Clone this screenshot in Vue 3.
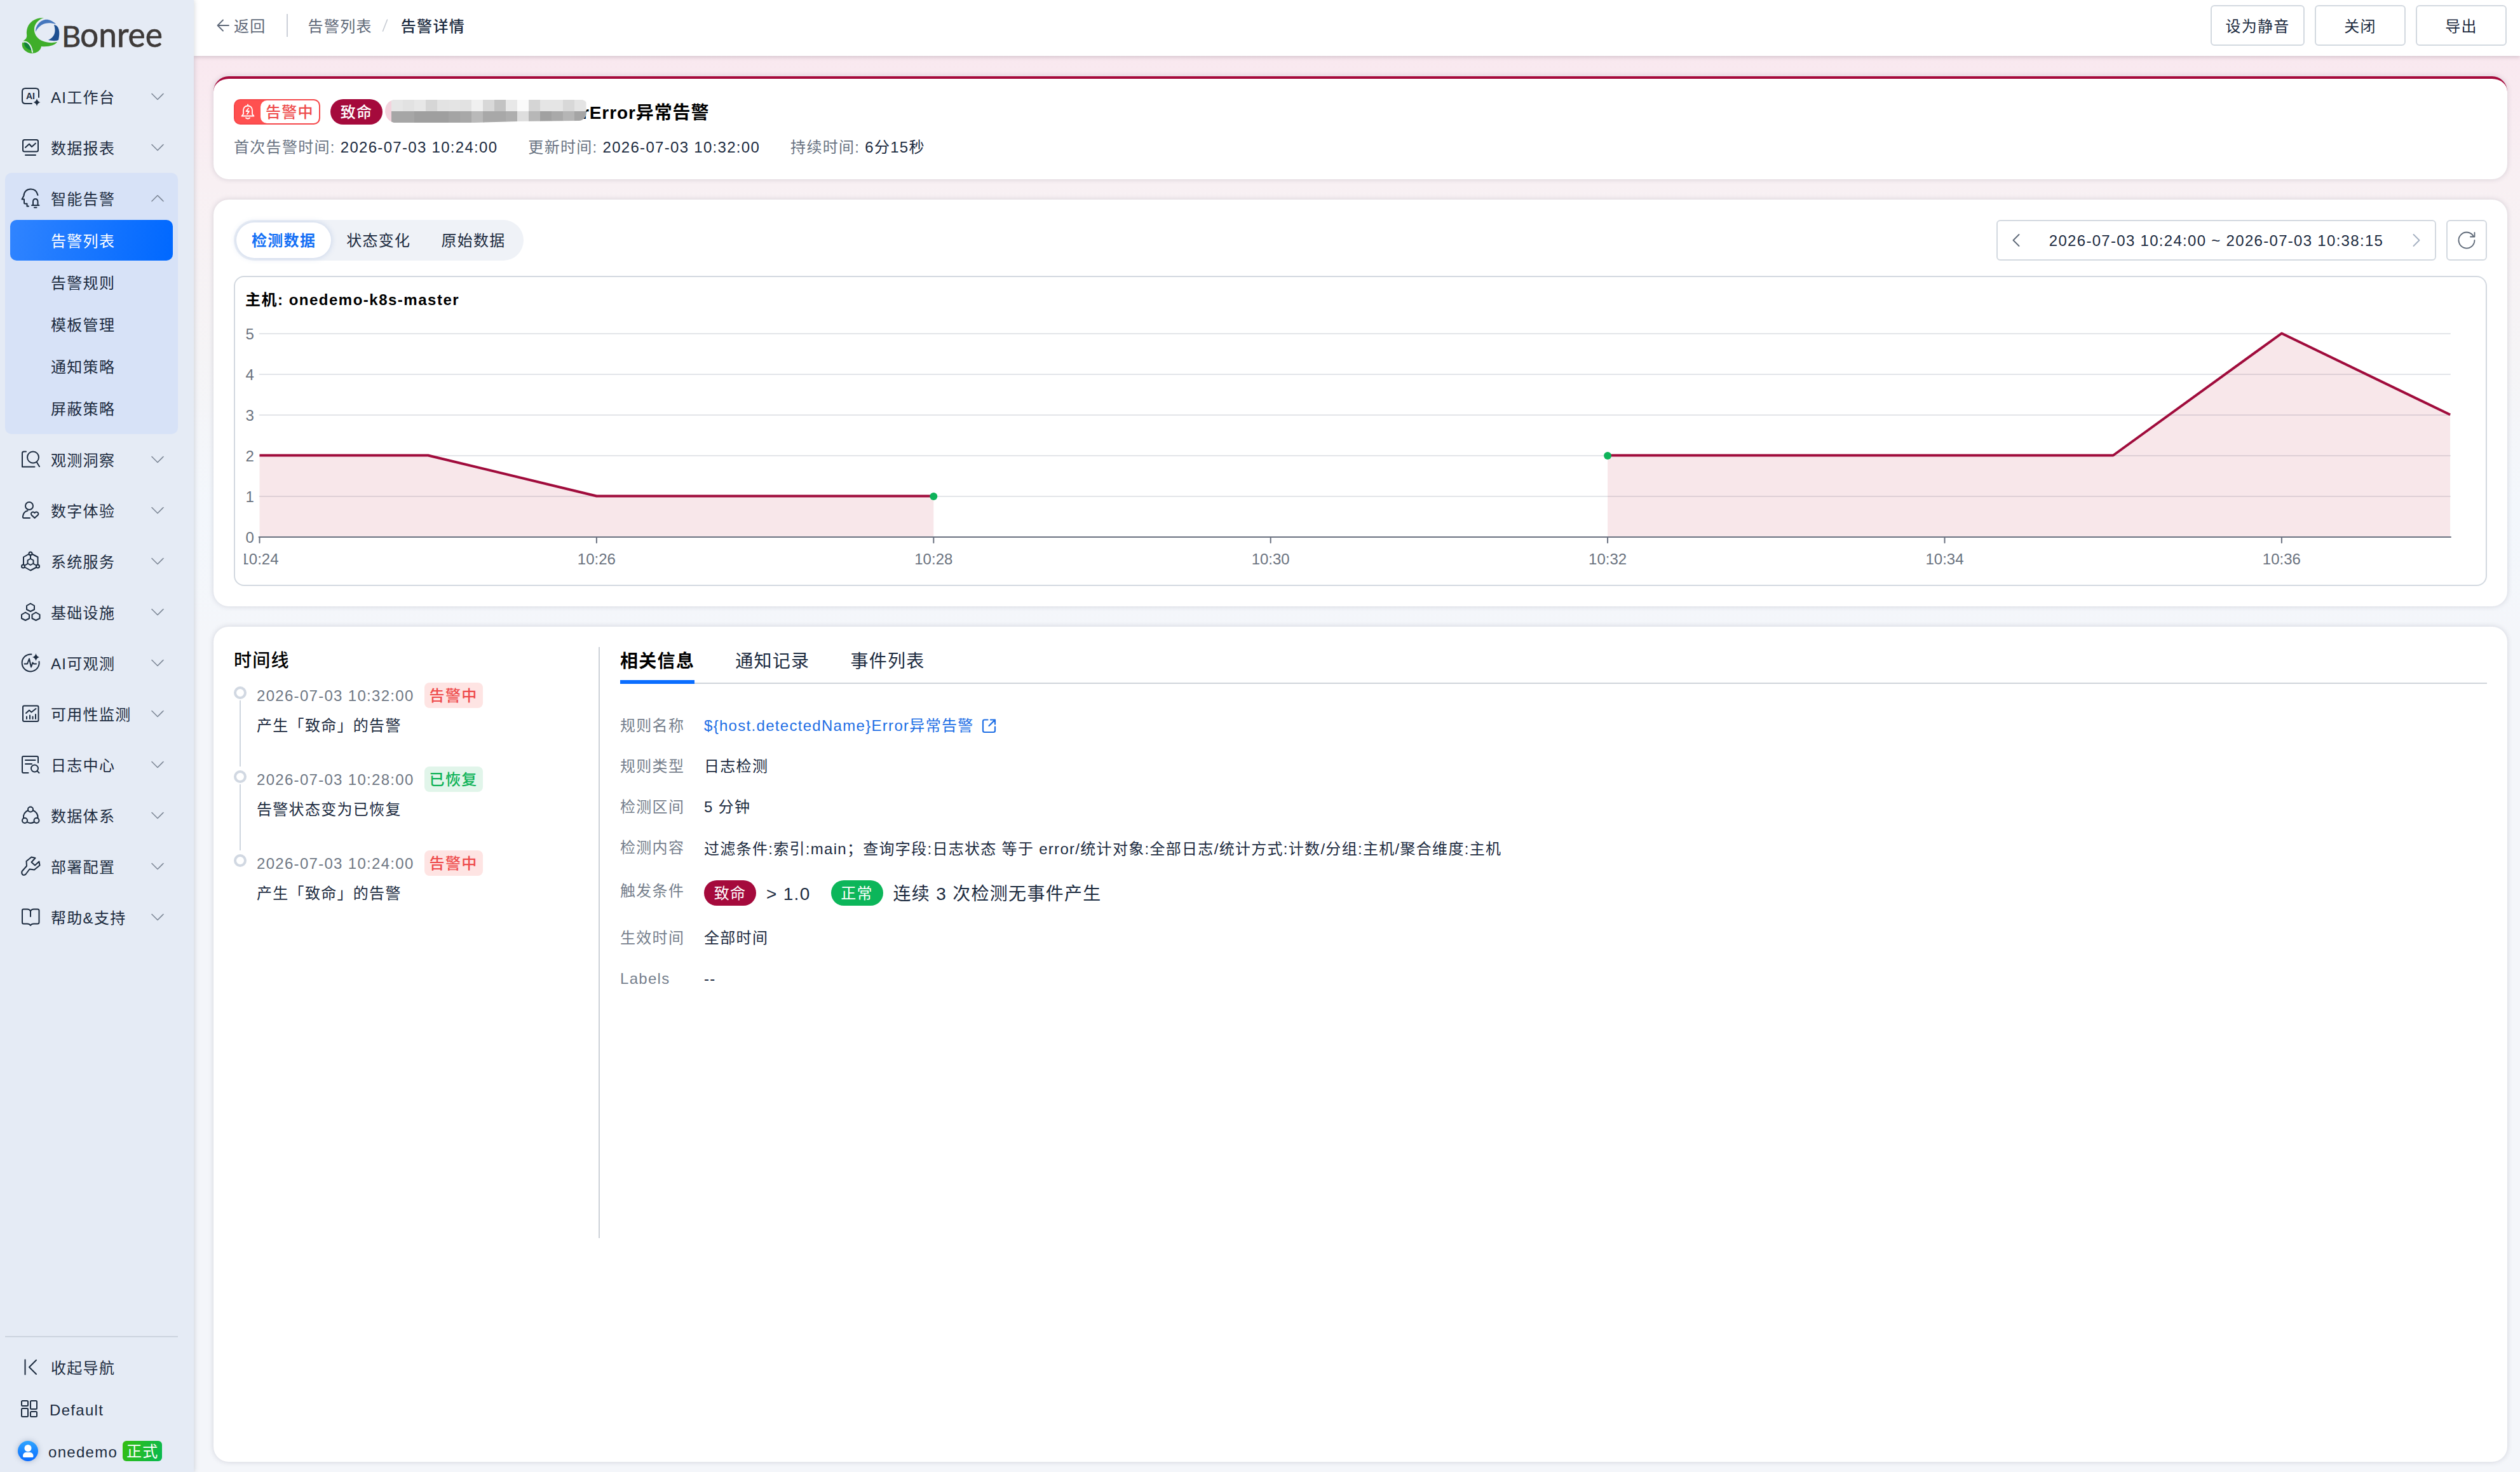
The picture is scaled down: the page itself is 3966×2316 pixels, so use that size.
<template>
  <div class="layout">
    <aside class="sidebar">
      <div class="logo">
        <svg width="170" height="60" viewBox="0 0 170 60">
          <path d="M34 0C14 0 6 13 7 26C8 32 5 34 1 37C-3 45 3 54 14 56C24 56 29 51 30 45C42 46 52 43 55 38C44 41 29 38 23 30C15 19 19 5 34 0Z" fill="#3fae2a" />
          <path d="M3 39C7 37 13 41 15 51C8 50 3 46 3 39Z" fill="#12813a" />
          <path d="M1 38C6 36 14 40 16 54" fill="none" stroke="#e9f0f5" stroke-width="2" />
          <path d="M21 22C21 8 37 -6 53 10C39 6 28 9 21 22Z" fill="#4577bd" />
          <path d="M50 11C58 12 60 22 57 35C52 37 46 36 41 35C50 31 54 23 50 11Z" fill="#1d4f91" />
          <text x="62" y="45.5" class="logo-text"><tspan font-size="47">B</tspan><tspan x="91" font-size="55" textLength="130" lengthAdjust="spacingAndGlyphs">onree</tspan></text>
        </svg>
      </div>

      <nav class="menu">
        <div v-for="item in menus" :key="item.name" :class="item.children ? 'menu-group' : ''">
          <div class="menu-item">
            <svg class="menu-icon" viewBox="0 0 32 32" v-html="item.icon"></svg>
            <span class="menu-name">{{ item.name }}</span>
            <svg class="chevron" viewBox="0 0 20 12">
              <path :d="item.children ? 'M1 10.5L10 1.5L19 10.5' : 'M1 1.5L10 10.5L19 1.5'" />
            </svg>
          </div>
          <template v-if="item.children">
            <div v-for="(sub, i) in item.children" :key="sub" class="sub-item" :class="{ active: i === 0 }">{{ sub }}</div>
          </template>
        </div>
      </nav>

      <div class="side-bottom">
        <div class="bottom-item">
          <svg class="menu-icon" viewBox="0 0 32 32"><path d="M7.5 4.5V27.5M25 5L14 16L25 27" /></svg>
          <span>收起导航</span>
        </div>
        <div class="bottom-item">
          <svg class="menu-icon" viewBox="0 0 32 32">
            <rect x="2" y="3" width="10" height="8" rx="1.5" /><rect x="16" y="3" width="10" height="13" rx="1.5" />
            <rect x="2" y="15" width="10" height="13" rx="1.5" /><rect x="16" y="20" width="10" height="8" rx="1.5" />
          </svg>
          <span>Default</span>
        </div>
        <div class="bottom-item user">
          <div class="avatar">
            <svg width="32" height="32" viewBox="0 0 32 32">
              <circle cx="16" cy="11.5" r="5.5" />
              <path d="M8 24C8 20 10.5 18 13 18H19C21.5 18 24.5 20 24.5 24C24.5 25.5 24 26 22.5 26H10C8.5 26 8 25.5 8 24Z" />
            </svg>
          </div>
          <span>onedemo</span>
          <span class="version">正式</span>
        </div>
      </div>
    </aside>

    <div class="main">
      <header class="topbar">
        <div class="back">
          <svg width="20" height="20" viewBox="0 0 20 20"><path d="M10 1.5L1.5 10L10 18.5M1.5 10H19" /></svg>
          <span>返回</span>
        </div>
        <i class="split"></i>
        <span class="crumb">告警列表</span>
        <svg class="slash" width="10" height="20" viewBox="0 0 10 20"><path d="M8.5 1L1.5 19" /></svg>
        <span class="crumb current">告警详情</span>
        <div class="actions">
          <button type="button">设为静音</button>
          <button type="button">关闭</button>
          <button type="button">导出</button>
        </div>
      </header>

      <div class="content">
        <section class="card summary">
          <div class="title-row">
            <div class="status">
              <div class="status-icon">
                <svg width="24" height="26" viewBox="0 0 24 26">
                  <path d="M2.5 19.5H21.5L19 16.5V10.5C19 6 16 3.500 12 3.500S5 6 5 10.5V16.5ZM12 3.5V1.5M9 22.5Q12 25 15 22.5" />
                  <path d="M13 7.5L9.5 12H14L11 16.5" />
                </svg>
              </div>
              <span>告警中</span>
            </div>
            <span class="pill fatal">致命</span>
            <div class="title">
              <svg class="mosaic" width="320" height="38" viewBox="0 0 320 38">
                <defs>
                  <clipPath id="mask"><path d="M14 1H311Q319 4 319 12V18Q315 34 305 34L210 35L140 37H14Q2 34 0 20Q0 4 14 1Z" /></clipPath>
                </defs>
                <g clip-path="url(#mask)">
                  <rect width="14" height="38" fill="#f3d3dd" />
                  <template v-for="(c, i) in mosaic" :key="i">
                    <rect :x="10 + i * 18" y="0" width="18.5" height="19" :fill="c[0]" />
                    <rect :x="10 + i * 18" y="19" width="18.5" height="19" :fill="c[1]" />
                  </template>
                </g>
              </svg>
              <h1><span>r</span>Error异常告警</h1>
            </div>
          </div>
          <div class="meta">
            <div v-for="m in meta" :key="m.label">
              <span class="label">{{ m.label }}:</span>
              <span>{{ m.value }}</span>
            </div>
          </div>
        </section>

        <section class="card detect">
          <div class="detect-head">
            <div class="segment">
              <span v-for="(s, i) in segments" :key="s" :class="{ on: i === 0 }">{{ s }}</span>
            </div>
            <div class="range">
              <div class="range-box">
                <svg width="12" height="20" viewBox="0 0 12 20"><path d="M10.5 1L1.5 10L10.5 19" /></svg>
                <span>2026-07-03 10:24:00 ~ 2026-07-03 10:38:15</span>
                <svg class="dim" width="12" height="20" viewBox="0 0 12 20"><path d="M1.5 1L10.5 10L1.5 19" /></svg>
              </div>
              <div class="refresh">
                <svg width="32" height="32" viewBox="0 0 32 32">
                  <path d="M28.5 16A12.5 12.5 0 1 1 26.5 9.2M28.5 4V10.5H22" />
                </svg>
              </div>
            </div>
          </div>

          <div class="chart-box">
            <h3>主机: onedemo-k8s-master</h3>
            <svg class="chart" width="3510" height="400" viewBox="384 496 3510 400">
              <g v-for="v in 6" :key="'y' + v">
                <line v-if="v > 1" class="grid" x1="408.5" x2="3856" :y1="yPos(v - 1)" :y2="yPos(v - 1)" />
                <text x="386.5" :y="yPos(v - 1) + 8.5">{{ v - 1 }}</text>
              </g>
              <path v-for="(s, i) in series" :key="'a' + i" class="area" :d="areaPath(s)" />
              <line class="axis" x1="407.5" x2="3857" y1="845" y2="845" />
              <g v-for="m in 7" :key="'x' + m">
                <line class="axis" :x1="xPos(m * 2 - 2)" :x2="xPos(m * 2 - 2)" y1="845" y2="854" />
                <text :x="xPos(m * 2 - 2)" y="887.5" text-anchor="middle">10:{{ 22 + m * 2 }}</text>
              </g>
              <path v-for="(s, i) in series" :key="'l' + i" class="line" :d="linePath(s)" />
              <circle :cx="xPos(4)" :cy="yPos(1)" r="6" fill="#0eb35a" />
              <circle :cx="xPos(8)" :cy="yPos(2)" r="6" fill="#0eb35a" />
            </svg>
          </div>
        </section>

        <section class="card detail">
          <div class="timeline">
            <h2>时间线</h2>
            <div v-for="(t, i) in timeline" :key="i" class="node">
              <div class="rail"><i class="dot"></i><i v-if="i < timeline.length - 1" class="bar"></i></div>
              <div>
                <div class="node-head">
                  <span class="time">{{ t.time }}</span>
                  <span class="tag" :class="t.type">{{ t.tag }}</span>
                </div>
                <div class="node-text">{{ t.text }}</div>
              </div>
            </div>
          </div>
          <div class="info">
            <div class="tabs">
              <span v-for="(t, i) in tabs" :key="t" :class="{ on: i === 0 }">{{ t }}</span>
            </div>
            <div class="rows">
              <div class="row">
                <span class="label">规则名称</span>
                <a>${host.detectedName}Error异常告警
                  <svg width="24" height="24" viewBox="0 0 24 24">
                    <path d="M9.5 2.5H4.5Q2 2.5 2 5V19.5Q2 22 4.5 22H18.5Q21 22 21 19.5V13.5M14 2.5H21V9.5M21 2.5L11.5 12" />
                  </svg>
                </a>
              </div>
              <div class="row"><span class="label">规则类型</span><span>日志检测</span></div>
              <div class="row"><span class="label">检测区间</span><span>5 分钟</span></div>
              <div class="row">
                <span class="label">检测内容</span>
                <span class="low">过滤条件:索引:main；查询字段:日志状态 等于 error/统计对象:全部日志/统计方式:计数/分组:主机/聚合维度:主机</span>
              </div>
              <div class="row trigger">
                <span class="label">触发条件</span>
                <span class="pill fatal">致命</span>
                <span class="cond">&gt; 1.0</span>
                <span class="pill normal">正常</span>
                <span class="cond">连续 3 次检测无事件产生</span>
              </div>
              <div class="row"><span class="label">生效时间</span><span>全部时间</span></div>
              <div class="row"><span class="label">Labels</span><span>--</span></div>
            </div>
          </div>
        </section>
      </div>
    </div>
  </div>
</template>

<script setup>
const menus = [
  {
    name: 'AI工作台',
    icon: '<path d="M18 27H8Q3 27 3 22V8Q3 3 8 3H24Q29 3 29 8V17"/><text x="9" y="19.5" font-size="14" font-weight="700" letter-spacing="0" fill="#1c2b3f" stroke="none">AI</text><path d="M26 19Q27 24 31.5 25Q27 26 26 31Q25 26 20.5 25Q25 24 26 19Z" fill="#1c2b3f" stroke="none"/>'
  },
  {
    name: '数据报表',
    icon: '<rect x="4" y="4" width="24" height="18.5" rx="2.5"/><path d="M8 16L14 10.5L18 15L24 9.5M8 28H24"/>'
  },
  {
    name: '智能告警',
    icon: '<path d="M27.5 11C26 4.5 21.5 1.5 16.5 1.5C10 1.5 5.5 6 5.5 12L2.5 17.5H6V23.5Q6 24.5 7.5 24.5H10.5V28.5H13"/><path d="M18 27H29.5M20 27V21.5Q20 17 23.7 17T27.5 21.5V27M22 30.5H25.5"/>',
    children: ['告警列表', '告警规则', '模板管理', '通知策略', '屏蔽策略']
  },
  {
    name: '观测洞察',
    icon: '<path d="M9 3.5H5.5Q3 3.5 3 6V27.5H22.5M26 20.5L30 27"/><circle cx="20" cy="12.5" r="9"/>'
  },
  {
    name: '数字体验',
    icon: '<circle cx="14" cy="9" r="6"/><path d="M15 28H5.5Q3.5 28 4 25Q5 18 11.5 16.5"/><path d="M22.5 28L17.8 23.5C15 20.5 19.5 16.5 22.5 20C25.5 16.5 30.5 20.5 27.5 23.5Z"/>'
  },
  {
    name: '系统服务',
    icon: '<path d="M13 5L5 9.5V21M19 5L27.5 9.5V21M8 26L16 30.5L24.5 26M16 6V12M11.5 20L7 22.5M20.5 20L25 22.5"/><path d="M16 12L20.5 14.5V19.5L16 22L11.5 19.5V14.5Z"/><circle cx="16" cy="4" r="2.5"/><circle cx="4.5" cy="24" r="2.5"/><circle cx="27.5" cy="24" r="2.5"/>'
  },
  {
    name: '基础设施',
    icon: '<path d="M16 2.5L22 6V12L16 15L10 12V6ZM8 16.5L14 20V26L8 29L2 26V20ZM24.5 16.5L30.5 20V26L24.5 29L18.5 26V20Z"/>'
  },
  {
    name: 'AI可观测',
    icon: '<path d="M17.5 2.5A13.5 13.5 0 1 0 29.5 14M6.5 17.5H11L14 9.5L17 22.5L19.5 15.5L21 17.5H25"/><path d="M24.5 1Q25.5 6 30 7Q25.5 8 24.5 13Q23.5 8 19 7Q23.5 6 24.5 1Z" fill="#1c2b3f" stroke="none"/>'
  },
  {
    name: '可用性监测',
    icon: '<rect x="4" y="3.5" width="24.5" height="24.5" rx="2"/><path d="M9 15L14 10.5L17.5 13.5L24.5 8M10 20.5V24M15 18.5V24M19.5 20.5V24M24 17V24"/>'
  },
  {
    name: '日志中心',
    icon: '<path d="M12.5 29H5Q3 29 3 27V5Q3 3 5 3H26Q28 3 28 5V13M8 9H23.5M8 15H18"/><circle cx="22.5" cy="22" r="5.5"/><path d="M26.5 26L29.5 29"/>'
  },
  {
    name: '数据体系',
    icon: '<circle cx="16" cy="6.5" r="4"/><circle cx="7" cy="24" r="4"/><circle cx="25.5" cy="24" r="4"/><path d="M12 8C7 10.5 4.5 15 5 20M20 8C25.5 10.5 28 15 27.5 20M11 26.5Q16 29.5 21.5 26.5"/>'
  },
  {
    name: '部署配置',
    icon: '<path d="M23.5 3L17.5 1.5L9.5 8L10 15.5L2.5 24Q1.5 27.5 4 29.5Q6.5 30.5 8.5 28.5L14.5 20.5L22 21.5L30.5 14.5L29.5 8.5L23 14.5L17.5 9.5Z"/>'
  },
  {
    name: '帮助&支持',
    icon: '<path d="M16 6.5Q14.5 3.5 11 3.5H5Q3 3.5 3 5.5V24Q3 26.5 5 26.5H11Q14.5 26.5 16 29Q17.5 26.5 21 26.5H27Q29.5 26.5 29.5 24V5.5Q29.5 3.5 27 3.5H21Q17.5 3.5 16 6.5V15"/>'
  }
]

const mosaic = [
  ['#e6e6e6', '#a6a6a6'], ['#e2e2e2', '#a6a6a6'], ['#e7e7e7', '#9f9f9f'], ['#d6d6d6', '#9f9f9f'],
  ['#e3e3e3', '#9f9f9f'], ['#e4e4e4', '#a4a4a4'], ['#e2e2e2', '#a8a8a8'], ['#f0f0f0', '#b9b9b9'],
  ['#d8d8d8', '#a8a8a8'], ['#c3c3c3', '#a8a8a8'], ['#e8e8e8', '#aeaeae'], ['#fafafa', '#dedede'],
  ['#d5d5d5', '#b7b7b7'], ['#e5e5e5', '#a1a1a1'], ['#e5e5e5', '#a9a9a9'], ['#d8d8d8', '#b5b5b5'],
  ['#e4e4e4', '#a5a5a5']
]

const meta = [
  { label: '首次告警时间', value: '2026-07-03 10:24:00' },
  { label: '更新时间', value: '2026-07-03 10:32:00' },
  { label: '持续时间', value: '6分15秒' }
]

const segments = ['检测数据', '状态变化', '原始数据']
const tabs = ['相关信息', '通知记录', '事件列表']

const timeline = [
  { time: '2026-07-03 10:32:00', tag: '告警中', type: 'alarm', text: '产生「致命」的告警' },
  { time: '2026-07-03 10:28:00', tag: '已恢复', type: 'ok', text: '告警状态变为已恢复' },
  { time: '2026-07-03 10:24:00', tag: '告警中', type: 'alarm', text: '产生「致命」的告警' }
]

// [minute after 10:24, count]
const series = [
  [[0, 2], [1, 2], [2, 1], [4, 1]],
  [[8, 2], [11, 2], [12, 5], [13, 3]]
]

const xPos = (m) => 408.5 + m * 265.2
const yPos = (v) => 845 - v * 64

const linePath = (s) => 'M' + s.map(([m, v]) => `${xPos(m)} ${yPos(v) - 0.5}`).join('L')
const areaPath = (s) => `${linePath(s)}L${xPos(s[s.length - 1][0])} 845L${xPos(s[0][0])} 845Z`
</script>

<style>
body {
  margin: 0;
}
</style>

<style scoped>
* {
  box-sizing: border-box;
}

h1,
h2,
h3 {
  margin: 0;
}

.layout {
  display: flex;
  width: 3966px;
  height: 2316px;
  overflow: hidden;
  font-family: "Liberation Sans", "Noto Sans CJK SC", sans-serif;
  font-size: 24px;
  line-height: 32px;
  letter-spacing: 1.3px;
  color: #1c2b3f;
  white-space: nowrap;
}

svg {
  display: block;
  flex-shrink: 0;
  fill: none;
  stroke-linecap: round;
  stroke-linejoin: round;
}

/* sidebar */
.sidebar {
  display: flex;
  flex-direction: column;
  width: 305px;
  flex-shrink: 0;
  padding: 0 25px 0 8px;
  background: #e5ebf5;
  box-shadow: 0 0 8px rgba(60, 70, 90, 0.25);
  z-index: 2;
}

.logo {
  height: 112px;
  padding: 28px 0 0 27px;
}

.logo svg {
  overflow: visible;
}

.logo-text {
  font-family: Lato, sans-serif;
  letter-spacing: 0;
  fill: #3e3a39;
  stroke: #3e3a39;
  stroke-width: 0.6;
}

.menu-item {
  display: flex;
  align-items: center;
  height: 80px;
  padding: 0 22px 0 24px;
}

.menu-icon {
  width: 32px;
  height: 32px;
  stroke: #1c2b3f;
  stroke-width: 2;
}

.menu-name {
  flex: 1;
  margin-left: 16px;
  padding-top: 3px;
}

.chevron {
  width: 20px;
  height: 12px;
  stroke: #7d8796;
  stroke-width: 1.6;
}

.menu-group {
  height: 411px;
  border-radius: 10px;
  background: #d7e2f7;
}

.menu-group .menu-item {
  height: 74px;
  padding-top: 6px;
}

.sub-item {
  height: 64px;
  margin: 0 8px 2px;
  padding-left: 64px;
  line-height: 67px;
  border-radius: 10px;
}

.sub-item.active {
  color: #fff;
  background: linear-gradient(100deg, #3084ff, #0068ff);
}

.side-bottom {
  margin-top: auto;
  height: 214px;
  padding-top: 14px;
  border-top: 2px solid #ccd3df;
}

.bottom-item {
  display: flex;
  align-items: center;
  gap: 16px;
  height: 66px;
  padding-left: 24px;
}

.bottom-item span {
  padding-top: 3px;
}

.bottom-item:nth-child(2) {
  gap: 14px;
}

.bottom-item.user {
  padding-left: 20px;
}

.avatar {
  width: 32px;
  height: 32px;
  border-radius: 50%;
  background: linear-gradient(#2fa5ff, #0a6bff);
  box-shadow: 0 0 8px rgba(60, 80, 120, 0.35);
}

.avatar svg {
  fill: #fff;
}

.bottom-item .version {
  width: 62px;
  height: 32px;
  margin-left: -8px;
  padding-top: 1px;
  border-radius: 6px;
  text-align: center;
  color: #fff;
  background: linear-gradient(110deg, #35be10, #08b951);
}

/* top bar */
.main {
  flex: 1;
  display: flex;
  flex-direction: column;
  background: linear-gradient(#f9e8ef 88px, #f8f0f3 290px, #f5f4f6 560px, #f3f7fc 800px, #f4f6fa 1000px);
}

.topbar {
  display: flex;
  align-items: center;
  height: 88px;
  padding: 0 21px 8px 36px;
  flex-shrink: 0;
  background: #fff;
  box-shadow: 0 2px 6px rgba(60, 40, 60, 0.2);
  z-index: 1;
}

.topbar span {
  padding-top: 3px;
}

.back {
  display: flex;
  align-items: center;
  gap: 7px;
  color: #5e6878;
}

.back svg {
  stroke: #5e6878;
  stroke-width: 1.8;
}

.split {
  width: 2px;
  height: 36px;
  margin: 0 32px 0 32px;
  background: #cbd0d8;
}

.crumb {
  color: #5e6878;
}

.crumb.current {
  font-weight: 500;
  color: #1c2b3f;
}

.slash {
  margin: 0 20px 0 15px;
  stroke: #c5cad2;
  stroke-width: 1.6;
}

.actions {
  display: flex;
  gap: 16px;
  margin-left: auto;
}

button {
  width: 143px;
  height: 64px;
  padding: 3px 0 0;
  border: 2px solid #d3d9e0;
  border-radius: 6px;
  font: inherit;
  letter-spacing: inherit;
  color: inherit;
  background: #fff;
}

button:first-child {
  width: 148px;
}

.content {
  flex: 1;
  display: flex;
  flex-direction: column;
  gap: 32px;
  padding: 32px 20px 16px 31px;
}

.card {
  border-radius: 24px;
  background: #fff;
  box-shadow: 0 0 8px rgba(50, 50, 80, 0.18);
}

/* summary */
.summary {
  height: 162px;
  padding: 32px;
  border-top: 4px solid #a60a3c;
}

.title-row {
  display: flex;
  align-items: center;
  height: 40px;
}

.status {
  display: flex;
  align-items: center;
  width: 136px;
  height: 40px;
  border: 2px solid #f5484b;
  border-radius: 10px;
  overflow: hidden;
  color: #ee4b4b;
  font-weight: 500;
  background: #ff5050;
}

.status-icon {
  display: flex;
  align-items: center;
  justify-content: center;
  width: 40px;
}

.status-icon svg {
  stroke: #fff;
  stroke-width: 1.8;
}

.status > span {
  flex: 1;
  height: 36px;
  padding-left: 8px;
  line-height: 38px;
  border-radius: 10px 8px 8px 10px;
  background: #fff;
}

.pill {
  width: 82px;
  height: 40px;
  border-radius: 20px;
  text-align: center;
  line-height: 42px;
  color: #fff;
  font-weight: 500;
}

.pill.fatal {
  background: #a50a3c;
}

.pill.normal {
  background: #0cb65a;
}

.title-row .pill {
  margin-left: 16px;
}

.title {
  display: flex;
  position: relative;
  margin-left: 4px;
}

.mosaic {
  position: absolute;
  left: 0;
  top: 0;
}

.title h1 {
  height: 40px;
  padding-left: 310px;
  font-size: 28px;
  line-height: 43px;
  letter-spacing: 0.9px;
  color: #000;
}

.meta {
  display: flex;
  gap: 48px;
  margin-top: 20px;
}

.meta > div {
  display: flex;
  gap: 8px;
}

.label {
  color: #6a7483;
}

/* detect */
.detect {
  height: 640px;
  padding: 32px 32px 0;
}

.detect-head {
  display: flex;
  justify-content: space-between;
  height: 64px;
}

.segment {
  display: flex;
  padding: 4px;
  border-radius: 32px;
  background: #eff2f7;
}

.segment span {
  height: 56px;
  padding: 0 24px;
  line-height: 58px;
}

.segment .on {
  border-radius: 28px;
  font-weight: 700;
  color: #1570f5;
  background: #fff;
  box-shadow: 0 0 10px rgba(90, 130, 200, 0.3);
}

.range {
  display: flex;
  gap: 16px;
}

.range-box,
.refresh {
  display: flex;
  align-items: center;
  justify-content: center;
  border: 2px solid #d3d9e0;
  border-radius: 6px;
}

.range-box {
  width: 692px;
  justify-content: space-between;
  padding: 0 23px;
}

.range-box span {
  padding-top: 2px;
}

.refresh {
  width: 64px;
}

.range svg {
  stroke: #5b6675;
  stroke-width: 1.8;
}

.range svg.dim {
  stroke: #a3afc0;
}

.chart-box {
  height: 488px;
  margin-top: 24px;
  padding: 20px 14px 0;
  border: 2px solid #d3d9e0;
  border-radius: 16px;
}

.chart-box h3 {
  padding-left: 2px;
  font-size: 24px;
  letter-spacing: 1.5px;
  color: #000;
}

.chart {
  margin-top: 8px;
}

.chart text {
  font-size: 24px;
  letter-spacing: 0;
  fill: #6b7380;
}

.grid {
  stroke: #e3e5e9;
  stroke-width: 2;
}

.axis {
  stroke: #6a7180;
  stroke-width: 2;
}

.area {
  fill: rgba(185, 15, 45, 0.1);
}

.line {
  stroke: #a00c3c;
  stroke-width: 4;
  stroke-linecap: butt;
}

/* detail */
.detail {
  flex: 1;
  display: flex;
  align-items: flex-start;
  padding: 32px;
}

.timeline {
  width: 576px;
  height: 930px;
  border-right: 2px solid #ccd1d8;
}

h2 {
  height: 40px;
  margin-bottom: 16px;
  font-size: 28px;
  line-height: 43px;
  font-weight: 500;
  color: #000;
}

.node {
  display: flex;
  gap: 16px;
  height: 132px;
}

.rail {
  display: flex;
  flex-direction: column;
  align-items: center;
  width: 20px;
  padding-top: 6px;
}

.dot {
  width: 20px;
  height: 20px;
  border: 4px solid #d1d8e2;
  border-radius: 50%;
}

.bar {
  width: 2px;
  height: 106px;
  margin-top: 2px;
  background: #cfd6df;
}

.node-head {
  display: flex;
  align-items: center;
  gap: 16px;
  height: 40px;
}

.time {
  padding-top: 2px;
  color: #6f7885;
}

.tag {
  width: 92px;
  height: 40px;
  border-radius: 8px;
  text-align: center;
  line-height: 42px;
  font-weight: 500;
}

.tag.alarm {
  color: #ee4b4b;
  background: #fee4e3;
}

.tag.ok {
  color: #0db256;
  background: #e1f5ea;
}

.node-text {
  margin-top: 12px;
}

.info {
  flex: 1;
  padding-left: 32px;
}

.tabs {
  display: flex;
  gap: 64px;
  height: 58px;
  border-bottom: 2px solid #cfd4da;
  font-size: 28px;
  line-height: 45px;
}

.tabs .on {
  height: 58px;
  border-bottom: 6px solid #0a6dff;
  font-weight: 700;
  color: #000;
}

.rows {
  padding-top: 34px;
}

.row {
  display: flex;
  align-items: center;
  height: 64px;
}

.row .label {
  width: 132px;
  color: #76808d;
}

.row a {
  display: flex;
  align-items: center;
  gap: 12px;
  color: #1f6fe5;
}

.row svg {
  stroke: #1f6fe5;
  stroke-width: 2.2;
}

.low {
  padding-top: 4px;
}

.trigger {
  height: 78px;
}

.trigger .label {
  padding-bottom: 6px;
}

.trigger .pill {
  font-weight: 400;
}

.cond {
  margin: 0 32px 0 16px;
  padding-top: 4px;
  font-size: 28px;
}
</style>
